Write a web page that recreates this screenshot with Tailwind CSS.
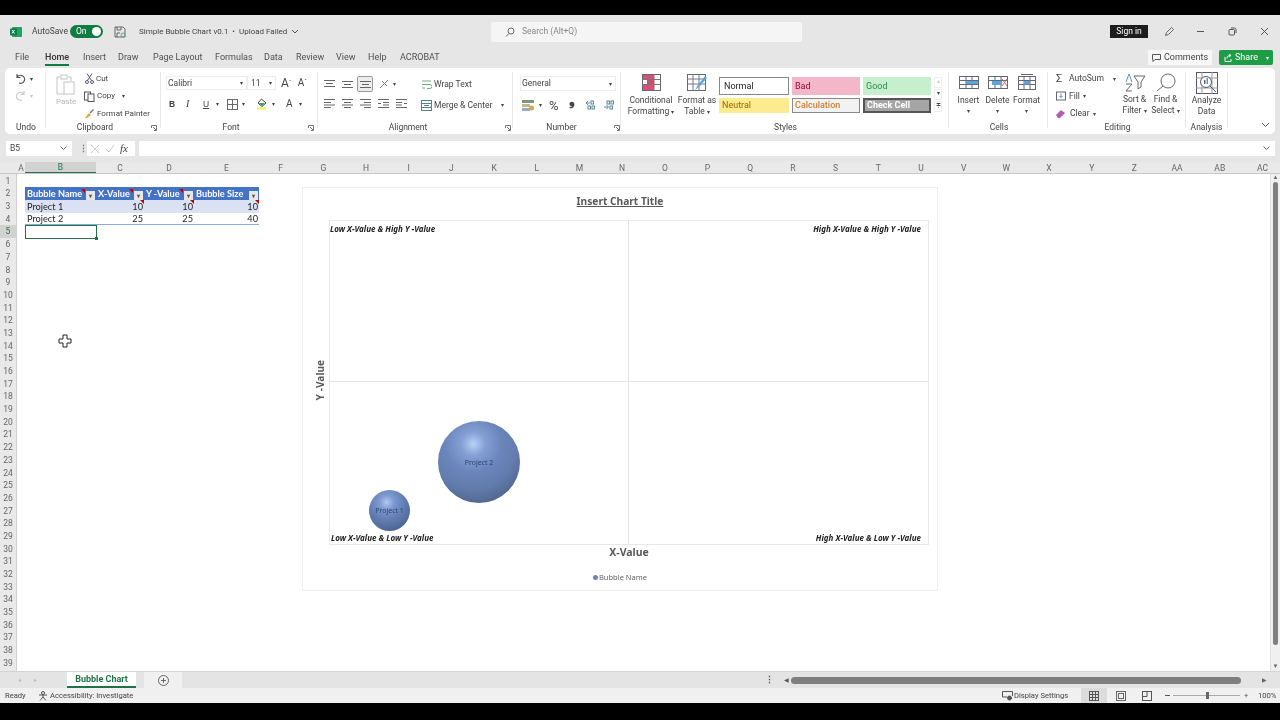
<!DOCTYPE html>
<html><head><meta charset="utf-8"><title>Excel</title>
<script src="https://cdn.jsdelivr.net/npm/@tailwindcss/browser@4"></script></head>
<body class="bg-black">
<div class="w-[1280px] h-[720px] overflow-hidden flex flex-col bg-[#e6e6e6] font-['Roboto',sans-serif] text-[8.5px] text-[#444] leading-none blur-[0.3px]">
<div class="h-[15px] shrink-0 bg-black"></div>

<!-- title bar -->
<div class="h-[30px] shrink-0 flex items-center pl-[10px] pr-[9px] pt-[3px] bg-[#e6e6e6]">
  <svg class="w-[12px] h-[12px]" viewBox="0 0 12 12"><rect x="2" y="1" width="10" height="10" rx="1" fill="#21a366"/><rect x="0" y="2.5" width="7" height="7" rx="1" fill="#107c41"/><path d="M2 4l2.5 3.5M4.500 4L2 7.500" stroke="#fff" stroke-width="1"/></svg>
  <span class="ml-[10px] w-[38px]">AutoSave</span>
  <div class="w-[33px] h-[13px] rounded-full bg-[#107c41] flex items-center justify-between pl-[6px] pr-[2px] text-white"><span>On</span><span class="w-[9px] h-[9px] rounded-full bg-white"></span></div>
  <svg class="ml-[11px] w-[12px] h-[12px]" viewBox="0 0 12 12" fill="none" stroke="#666"><path d="M1 1h8l2 2v8H1z"/><path d="M3 1v3h4V1M3 11V7h3"/><circle cx="9" cy="9" r="2" stroke="#6aa87f"/></svg>
  <span class="ml-[13px] w-[152px] whitespace-nowrap text-[8px]">Simple Bubble Chart v0.1 &nbsp;•&nbsp; Upload Failed</span>
  <svg class="w-[8px] h-[6px]" viewBox="0 0 8 6" fill="none" stroke="#555"><path d="M1 1l3 3 3-3"/></svg>
  <div class="ml-[192px] w-[311px] h-[20px] bg-[#f5f5f5] rounded-[2px] flex items-center pl-[14px] text-[#888]">
    <svg class="w-[10px] h-[10px]" viewBox="0 0 10 10" fill="none" stroke="#666"><circle cx="6" cy="4" r="3"/><path d="M4 6.500L1 9.500"/></svg>
    <span class="ml-[7px]">Search (Alt+Q)</span>
  </div>
  <div class="ml-[308px] w-[38px] h-[13px] bg-[#1d1d1d] text-white flex items-center justify-center">Sign in</div>
  <svg class="ml-[16px] w-[11px] h-[11px]" viewBox="0 0 11 11" fill="none" stroke="#666"><path d="M1.500 9.500l1-3 5-5 2 2-5 5z"/></svg>
  <svg class="ml-[21px] w-[9px] h-[9px]" viewBox="0 0 9 9" stroke="#555"><path d="M1 4.500h7"/></svg>
  <svg class="ml-[23px] w-[9px] h-[9px]" viewBox="0 0 9 9" fill="none" stroke="#555"><rect x="1" y="2.500" width="5.500" height="5.500" rx="1"/><path d="M3 1h3.500a1.500 1.500 0 0 1 1.500 1.500V6"/></svg>
  <svg class="ml-[23px] w-[9px] h-[9px]" viewBox="0 0 9 9" stroke="#555"><path d="M1 1l7 7M8 1l-7 7"/></svg>
</div>

<!-- tabs -->
<div class="h-[23px] shrink-0 flex items-center pl-[15px] pr-[7px] pt-[2px] text-[9px] text-[#505050]">
  <span class="w-[30px]">File</span>
  <span class="w-[38px] h-[21px] flex items-start pt-[6px]"><span class="border-b-2 border-[#107c41] pb-[2px] text-[#333] font-medium">Home</span></span>
  <span class="w-[35px]">Insert</span><span class="w-[35px]">Draw</span><span class="w-[62px]">Page Layout</span><span class="w-[49px]">Formulas</span><span class="w-[32px]">Data</span><span class="w-[40px]">Review</span><span class="w-[32px]">View</span><span class="w-[32px]">Help</span><span>ACROBAT</span>
  <div class="ml-auto w-[64px] h-[15px] bg-[#f7f7f7] flex items-center justify-center gap-[3px] text-[#444]"><svg class="w-[9px] h-[8px]" viewBox="0 0 9 8" fill="none" stroke="#555"><path d="M.5.5h8v5H3L1 7.500V5.500H.5z"/></svg>Comments</div>
  <div class="ml-[7px] w-[54px] h-[15px] bg-[#1f9c46] rounded-[2px] text-white flex items-center pl-[5px] gap-[3px]"><svg class="w-[8px] h-[8px]" viewBox="0 0 8 8" fill="none" stroke="#fff"><path d="M1 3v4.500h6V5M3 4.500c0-2 1.500-3 3-3M5 0l2 1.500L5 3"/></svg>Share<span class="ml-auto mr-[4px] text-[6px]">▾</span></div>
</div>

<!-- ribbon -->
<div class="h-[66px] shrink-0 mx-[5px] bg-white rounded-[5px] flex relative">
  <!-- Undo -->
  <div class="w-[40px] flex flex-col shrink-0">
    <div class="h-[55px] pt-[5px] pl-[10px] flex flex-col gap-[6px]">
      <div class="flex items-center gap-[4px]"><svg class="w-[11px] h-[11px]" viewBox="0 0 11 11" fill="none" stroke="#555" stroke-width="1.200"><path d="M2 1v3.500h3.500M2 4.500A4 4 0 1 1 4 10"/></svg><span class="text-[6px]">▾</span></div>
      <div class="flex items-center gap-[4px] opacity-30"><svg class="w-[11px] h-[11px]" viewBox="0 0 11 11" fill="none" stroke="#555" stroke-width="1.200"><path d="M9 1v3.500H5.500M9 4.500A4 4 0 1 0 7 10"/></svg><span class="text-[6px]">▾</span></div>
    </div>
    <div class="text-center pl-[2px]">Undo</div>
  </div>
  <div class="w-px h-[56px] mt-[4px] bg-[#e8e8e8]"></div>
  <!-- Clipboard -->
  <div class="w-[114px] flex flex-col shrink-0 relative">
    <div class="h-[55px] flex">
      <div class="w-[38px] pl-[10px] pt-[6px] text-[#b5b5b5]">
        <svg class="w-[20px] h-[21px]" viewBox="0 0 20 21" fill="none" stroke="#c4c4c4"><path d="M4 3H1v17h7M12 3h3v4"/><rect x="5" y="1" width="6" height="4"/><rect x="8" y="8" width="10" height="12"/></svg>
        <div class="mt-[3px] text-[8px]">Paste</div>
      </div>
      <div class="pt-[5px] flex flex-col gap-[6.500px] text-[#444] text-[8px]">
        <div class="h-[11px] flex items-center gap-[2px] whitespace-nowrap"><svg class="ml-[1px] w-[9px] h-[11px]" viewBox="0 0 9 11" fill="none" stroke="#557"><path d="M2 .5l4.500 7M7 .5L2.500 7.500"/><circle cx="2" cy="9" r="1.500"/><circle cx="7" cy="9" r="1.500"/></svg>Cut</div>
        <div class="h-[11px] flex items-center gap-[2px] whitespace-nowrap"><svg class="w-[11px] h-[11px]" viewBox="0 0 11 11" fill="none" stroke="#555"><rect x=".5" y="1" width="6" height="8"/><rect x="4" y="3" width="6" height="7.500" fill="#fff"/></svg>Copy<span class="ml-[5px] text-[6px]">▾</span></div>
        <div class="h-[11px] flex items-center gap-[2px] whitespace-nowrap"><svg class="w-[11px] h-[11px]" viewBox="0 0 11 11"><path d="M1 10l4-5 2 2-4 3z" fill="#e3a33a"/><path d="M5.500 4.500L9 1l1 1-3.500 3.500z" fill="#777"/></svg>Format Painter</div>
      </div>
    </div>
    <div class="text-center pr-[16px]">Clipboard</div>
    <svg class="absolute right-[3px] bottom-[3px] w-[6px] h-[6px]" viewBox="0 0 6 6" fill="none" stroke="#777"><path d="M.5 3V.5H5.500v5H3M2 2l3 3"/></svg>
  </div>
  <div class="w-px h-[56px] mt-[4px] bg-[#e8e8e8]"></div>
  <!-- Font -->
  <div class="w-[156px] flex flex-col shrink-0 relative">
    <div class="h-[55px] pl-[5px] pt-[8px]">
      <div class="flex items-center h-[14px]">
        <div class="w-[81px] h-[14px] border border-[#eee] flex items-center justify-between px-[1px] pr-[3px]"><span>Calibri</span><span class="text-[6px]">▾</span></div>
        <div class="w-[29px] h-[14px] border border-[#eee] flex items-center justify-between pl-[3px] pr-[3px]"><span>11</span><span class="text-[6px]">▾</span></div>
        <span class="ml-[5px] text-[12px]">A<sup class="text-[6px]">ˆ</sup></span><span class="ml-[6px] text-[10px]">A<sup class="text-[6px]">ˇ</sup></span>
      </div>
      <div class="mt-[7px] h-[14px] flex items-center pl-[3px]">
        <span class="w-[17px] font-bold font-['Liberation_Sans']">B</span><span class="w-[17px] italic font-['Liberation_Serif'] text-[10px]">I</span><span class="underline w-[13px] font-['Liberation_Sans']">U</span><span class="text-[6px] w-[11px]">▾</span>
        <svg class="w-[11px] h-[11px]" viewBox="0 0 11 11" fill="none" stroke="#666"><rect x=".5" y=".5" width="10" height="10"/><path d="M5.500 0v11M0 5.500h11"/></svg><span class="text-[6px] w-[18px] pl-[4px]">▾</span>
        <svg class="w-[11px] h-[12px]" viewBox="0 0 11 12"><path d="M5.500 1L10 5 6 8.500 2 5z" fill="none" stroke="#444"/><rect x="1" y="9.500" width="9" height="2" fill="#f5ee4a"/><path d="M3 5h6L6 8z" fill="#36a35a"/></svg><span class="text-[6px] w-[19px] pl-[5px]">▾</span>
        <span class="w-[13px] text-[10px]">A</span><span class="text-[6px]">▾</span>
      </div>
    </div>
    <div class="text-center pr-[16px]">Font</div>
    <svg class="absolute right-[3px] bottom-[3px] w-[6px] h-[6px]" viewBox="0 0 6 6" fill="none" stroke="#777"><path d="M.5 3V.5H5.500v5H3M2 2l3 3"/></svg>
  </div>
  <div class="w-px h-[56px] mt-[4px] bg-[#e8e8e8]"></div>
  <!-- Alignment -->
  <div class="w-[194px] flex flex-col shrink-0 relative">
    <div class="h-[55px] pl-[6px] pt-[7px] flex">
      <div class="w-[94px]">
        <div class="flex items-center gap-[7px] h-[17px]">
          <svg class="w-[11px] h-[8px]" viewBox="0 0 11 8" stroke="#666"><path d="M0 .5h11M2 3.500h7M0 6.500h11"/></svg>
          <svg class="w-[11px] h-[8px]" viewBox="0 0 11 8" stroke="#666"><path d="M0 1.500h11M2 4.500h7M0 7.500h11"/></svg>
          <div class="w-[16px] h-[16px] border border-[#999] rounded-[2px] bg-[#eee] flex items-center justify-center -mx-[3px]"><svg class="w-[11px] h-[8px]" viewBox="0 0 11 8" stroke="#666"><path d="M0 1.500h11M2 4.500h7M0 7.500h11"/></svg></div>
          <svg class="ml-[2px] w-[11px] h-[11px]" viewBox="0 0 11 11" fill="none" stroke="#778"><path d="M1 10L9 2M3 3l5 5"/></svg><span class="text-[6px] -ml-[4px]">▾</span>
        </div>
        <div class="mt-[5px] flex items-center gap-[7px] h-[12px]">
          <svg class="w-[11px] h-[9px]" viewBox="0 0 11 9" stroke="#666"><path d="M0 .5h11M0 3.500h7M0 6h11M0 8.500h7"/></svg>
          <svg class="w-[11px] h-[9px]" viewBox="0 0 11 9" stroke="#666"><path d="M0 .5h11M2 3.500h7M0 6h11M2 8.500h7"/></svg>
          <svg class="w-[11px] h-[9px]" viewBox="0 0 11 9" stroke="#666"><path d="M0 .5h11M4 3.500h7M0 6h11M4 8.500h7"/></svg>
          <svg class="w-[11px] h-[9px]" viewBox="0 0 11 9" stroke="#666"><path d="M0 .5h11M5 3.500h6M5 6h6M0 8.500h11M0 4.500h3"/></svg>
          <svg class="w-[11px] h-[9px]" viewBox="0 0 11 9" stroke="#666"><path d="M0 .5h11M0 3.500h6M0 6h6M0 8.500h11M8 4.500h3"/></svg>
        </div>
      </div>
      <div class="ml-[3px] flex flex-col gap-[9px] pt-[3px]">
        <div class="flex items-center gap-[2px] h-[12px] whitespace-nowrap"><svg class="w-[11px] h-[11px]" viewBox="0 0 11 11" fill="none" stroke="#7a8"><path d="M1 2h9M1 5.500h8a2 2 0 0 1 0 4H6M1 9h3"/></svg>Wrap Text</div>
        <div class="flex items-center gap-[2px] h-[12px] whitespace-nowrap"><svg class="w-[11px] h-[11px]" viewBox="0 0 11 11" fill="none" stroke="#5a7f8f"><rect x=".5" y=".5" width="10" height="10"/><path d="M3 5.500h5M.5 3.500h10M.5 7.500h10" /></svg>Merge &amp; Center<span class="ml-[7px] text-[6px]">▾</span></div>
      </div>
    </div>
    <div class="text-center pr-[14px]">Alignment</div>
    <svg class="absolute right-[1px] bottom-[3px] w-[6px] h-[6px]" viewBox="0 0 6 6" fill="none" stroke="#777"><path d="M.5 3V.5H5.500v5H3M2 2l3 3"/></svg>
  </div>
  <div class="w-px h-[56px] mt-[4px] bg-[#e8e8e8]"></div>
  <!-- Number -->
  <div class="w-[107px] flex flex-col shrink-0 relative">
    <div class="h-[55px] pl-[7px] pt-[8px]">
      <div class="w-[96px] h-[15px] border border-[#eee] flex items-center justify-between pl-[1px] pr-[3px]"><span>General</span><span class="text-[6px]">▾</span></div>
      <div class="mt-[7px] h-[14px] flex items-center">
        <svg class="ml-[2px] w-[12px] h-[11px]" viewBox="0 0 12 11"><rect width="12" height="3" fill="#7a9a7a"/><rect y="4" width="8" height="3" fill="#b9b98d"/><rect y="8" width="8" height="3" fill="#9ab"/><circle cx="9.500" cy="8" r="2.500" fill="#d9a84a"/></svg>
        <span class="text-[6px] ml-[5px]">▾</span>
        <span class="ml-[7px] text-[13px] w-[20px]">%</span>
        <span class="text-[15px] font-bold w-[16px] leading-[8px] -mt-[10px]">❟</span>
        <svg class="w-[11px] h-[10px]" viewBox="0 0 11 10" fill="none" stroke="#5a8a9a"><path d="M5 3h-4M3 1L1 3l2 2"/><rect x="6" y="1" width="2.500" height="3"/><rect x="3" y="6" width="2.500" height="3"/><rect x="7" y="6" width="2.500" height="3"/></svg>
        <svg class="ml-[7px] w-[11px] h-[10px]" viewBox="0 0 11 10" fill="none" stroke="#5a8a9a"><path d="M1 7h4M3.500 5L5.500 7l-2 2"/><rect x="4" y="1" width="2.500" height="3"/><rect x="8" y="1" width="2.500" height="3"/><rect x="7" y="6" width="2.500" height="3"/></svg>
      </div>
    </div>
    <div class="text-center pr-[10px]">Number</div>
    <svg class="absolute right-[0px] bottom-[3px] w-[6px] h-[6px]" viewBox="0 0 6 6" fill="none" stroke="#777"><path d="M.5 3V.5H5.500v5H3M2 2l3 3"/></svg>
  </div>
  <div class="w-px h-[56px] mt-[4px] bg-[#e8e8e8]"></div>
  <!-- Styles -->
  <div class="w-[327px] flex flex-col shrink-0">
    <div class="h-[55px] flex">
      <div class="w-[54px] ml-[3px] flex flex-col items-center pt-[6px] text-center leading-[11px]">
        <svg class="w-[19px] h-[17px]" viewBox="0 0 19 17" fill="none"><rect x=".5" y=".5" width="18" height="16" stroke="#666"/><rect x="1" y="1" width="11" height="4" fill="#e8487c"/><rect x="5" y="6" width="7" height="4" fill="#d9486f"/><rect x="1" y="11" width="11" height="5" fill="#e8487c"/><path d="M0 5.500h19M0 10.500h19M6 0v17M12 0v17" stroke="#777"/></svg>
        <div class="mt-[4px] whitespace-nowrap">Conditional</div><div class="whitespace-nowrap">Formatting <span class="text-[6px]">▾</span></div>
      </div>
      <div class="w-[38px] flex flex-col items-center pt-[6px] text-center leading-[11px]">
        <svg class="w-[20px] h-[17px]" viewBox="0 0 20 17" fill="none"><rect x=".5" y=".5" width="18" height="16" stroke="#667"/><path d="M0 5h19M0 10h19M6 0v17M12 0v17" stroke="#778"/><path d="M8 16l3-5 7-9 2 2-8 9z" fill="#5aa7dd"/></svg>
        <div class="mt-[4px] whitespace-nowrap">Format as</div><div class="whitespace-nowrap">Table <span class="text-[6px]">▾</span></div>
      </div>
      <div class="ml-[3px] pt-[9px] grid grid-cols-[70px_68px_68px] gap-x-[3px] gap-y-[3px] grid-rows-[18px_15px] text-[9px]">
        <div class="border border-[#888] flex items-center pl-[4px] text-[#222] h-[18px]">Normal</div>
        <div class="bg-[#f4b7c9] text-[#9c0639] flex items-center pl-[3px] h-[18px]">Bad</div>
        <div class="bg-[#c6efce] text-[#2e8b47] flex items-center pl-[3px] h-[18px]">Good</div>
        <div class="bg-[#fdeb8f] text-[#9c6500] flex items-center pl-[3px]">Neutral</div>
        <div class="bg-[#f2f2f2] border border-[#888] text-[#d08030] font-medium flex items-center pl-[2px]">Calculation</div>
        <div class="bg-[#a5a5a5] border-2 border-[#555] text-white font-bold flex items-center pl-[2px]">Check Cell</div>
      </div>
      <div class="ml-[3px] mt-[9px] w-[8px] flex flex-col text-[6px] text-center gap-[1px]">
        <div class="h-[11px] border border-[#eee] text-[#ccc]">▴</div><div class="h-[11px] border border-[#eee]">▾</div><div class="h-[11px] border border-[#eee]">≑</div>
      </div>
    </div>
    <div class="text-center pl-[2px]">Styles</div>
  </div>
  <div class="w-px h-[56px] mt-[4px] bg-[#e8e8e8]"></div>
  <!-- Cells -->
  <div class="w-[98px] flex flex-col shrink-0">
    <div class="h-[55px] flex justify-center gap-[4px] pt-[6px] pr-[1px] text-center">
      <div class="w-[25px] flex flex-col items-center"><svg class="w-[20px] h-[17px]" viewBox="0 0 20 17" fill="none" stroke="#667"><rect x=".5" y="2.500" width="19" height="12"/><path d="M0 6.500h20M0 10.500h20M7 2v13M13 2v13"/><rect x="7" y="7" width="12" height="3" fill="#5aa7dd" stroke="none"/></svg><div class="mt-[5px]">Insert</div><div class="text-[6px] mt-[3px]">▾</div></div>
      <div class="w-[25px] flex flex-col items-center"><svg class="w-[20px] h-[17px]" viewBox="0 0 20 17" fill="none" stroke="#667"><rect x=".5" y="2.500" width="19" height="12"/><path d="M0 6.500h20M7 2v13M13 2v13"/><rect x="4" y="7" width="10" height="4" fill="#5aa7dd" stroke="none"/><path d="M14 5l5 7M19 5l-5 7" stroke="#c66"/></svg><div class="mt-[5px]">Delete</div><div class="text-[6px] mt-[3px]">▾</div></div>
      <div class="w-[25px] flex flex-col items-center"><svg class="w-[20px] h-[17px]" viewBox="0 0 20 17" fill="none" stroke="#667"><rect x="1.500" y="2.500" width="17" height="13"/><path d="M1 6.500h18M1 10.500h18M7 2v14M13 2v14M4 .5h12"/><rect x="7" y="7" width="6" height="3.500" fill="#5aa7dd" stroke="none"/></svg><div class="mt-[5px]">Format</div><div class="text-[6px] mt-[3px]">▾</div></div>
    </div>
    <div class="text-center pl-[2px]">Cells</div>
  </div>
  <div class="w-px h-[56px] mt-[4px] bg-[#e8e8e8]"></div>
  <!-- Editing -->
  <div class="w-[137px] flex flex-col shrink-0">
    <div class="h-[55px] flex">
      <div class="w-[71px] pl-[8px] pt-[5px] flex flex-col gap-[6.500px]">
        <div class="h-[11px] flex items-center gap-[3px] whitespace-nowrap"><span class="w-[10px] text-[11px]">Σ</span>AutoSum<span class="ml-[6px] text-[6px]">▾</span></div>
        <div class="h-[11px] flex items-center gap-[3px] whitespace-nowrap"><svg class="w-[10px] h-[10px]" viewBox="0 0 10 10" fill="none" stroke="#667"><rect x=".5" y="1" width="9" height="8"/><path d="M5 2.500v4M3.500 5L5 6.500 6.500 5" stroke="#5a8a9a"/></svg>Fill <span class="text-[6px]">▾</span></div>
        <div class="h-[11px] flex items-center gap-[3px] whitespace-nowrap"><svg class="w-[11px] h-[10px]" viewBox="0 0 11 10"><path d="M0 6l5-5 4 3-5 5H2z" fill="#b65ab8"/></svg>Clear <span class="text-[6px]">▾</span></div>
      </div>
      <div class="w-[31px] flex flex-col items-center pt-[5px] text-center leading-[11px]"><svg class="w-[22px] h-[19px]" viewBox="0 0 22 19" fill="none" stroke="#667"><path d="M2 9l3-8 3 8" stroke="#5a9ad0"/><path d="M2 11h6L2 18h6M10 3h11l-4 6v5l-3 2V9z"/></svg><div class="mt-[2px] whitespace-nowrap">Sort &amp;</div><div class="whitespace-nowrap">Filter <span class="text-[6px]">▾</span></div></div>
      <div class="w-[31px] flex flex-col items-center pt-[5px] text-center leading-[11px]"><svg class="w-[21px] h-[19px]" viewBox="0 0 21 19" fill="none" stroke="#667"><circle cx="13" cy="8" r="7"/><path d="M8 13l-6 5"/></svg><div class="mt-[2px] whitespace-nowrap">Find &amp;</div><div class="whitespace-nowrap">Select <span class="text-[6px]">▾</span></div></div>
    </div>
    <div class="text-center pl-[2px]">Editing</div>
  </div>
  <div class="w-px h-[56px] mt-[4px] bg-[#e8e8e8]"></div>
  <!-- Analysis -->
  <div class="w-[41px] flex flex-col shrink-0">
    <div class="h-[55px] flex flex-col items-center pt-[4px] text-center leading-[11px]"><svg class="w-[22px] h-[22px]" viewBox="0 0 22 22" fill="none" stroke="#556"><rect x=".5" y=".5" width="21" height="21"/><path d="M0 6h22M0 16h22M6 0v22M16 0v22" stroke="#999"/><circle cx="10" cy="10" r="5.500" fill="#fff"/><rect x="8" y="8" width="1.500" height="4" fill="#667" stroke="none"/><rect x="10.500" y="6" width="1.500" height="6" fill="#5a9ad0" stroke="none"/><path d="M14 14l6 6"/></svg><div class="mt-[1px] whitespace-nowrap">Analyze</div><div>Data</div></div>
    <div class="text-center">Analysis</div>
  </div>
  <div class="w-px h-[56px] mt-[4px] bg-[#e8e8e8]"></div>
  <svg class="absolute right-[5px] bottom-[6px] w-[9px] h-[6px]" viewBox="0 0 9 6" fill="none" stroke="#555"><path d="M1 1l3.500 3.500L8 1"/></svg>
</div>

<!-- formula bar -->
<div class="h-[28px] shrink-0 flex items-center pl-[6px] pr-[5px] pt-[1px]">
  <div class="w-[66px] h-[15px] bg-white flex items-center justify-between pl-[4px] pr-[5px]"><span>B5</span><svg class="w-[7px] h-[5px]" viewBox="0 0 7 5" fill="none" stroke="#666"><path d="M.5.5l3 3 3-3"/></svg></div>
  <span class="ml-[7px] w-[3px] text-[#777] font-bold leading-[4px]">⋮</span>
  <div class="ml-[5px] w-[48px] h-[15px] bg-white flex items-center pl-[3px] gap-[5px]">
    <svg class="w-[10px] h-[10px]" viewBox="0 0 10 10" stroke="#ccc"><path d="M1 1l8 8M9 1L1 9"/></svg>
    <svg class="w-[10px] h-[10px]" viewBox="0 0 10 10" fill="none" stroke="#ccc"><path d="M1 5l3 3 5-7"/></svg>
    <span class="italic font-['Liberation_Serif'] text-[11px]">fx</span>
  </div>
  <div class="ml-[4px] flex-1 h-[15px] bg-white flex items-center justify-end pr-[5px]"><svg class="w-[7px] h-[5px]" viewBox="0 0 7 5" fill="none" stroke="#666"><path d="M.5.5l3 3 3-3"/></svg></div>
</div>

<!-- column headers -->
<div class="h-[12px] shrink-0 flex bg-[#e9e9e9] border-b border-[#c8c8c8] text-[#666] overflow-hidden text-center items-center pt-[1px]">
  <span class="w-[17px] shrink-0"></span>
  <span class="w-[8px] shrink-0">A</span>
  <span class="w-[71px] shrink-0 h-[12px] bg-[#d2d2d2] border-b-2 border-[#217346] text-[#217346] leading-[11px]">B</span>
  <span class="w-[48px] shrink-0">C</span><span class="w-[50px] shrink-0">D</span><span class="w-[65px] shrink-0">E</span><span class="w-[43px] shrink-0">F</span>
  <span class="w-[42.700px] shrink-0">G</span><span class="w-[42.700px] shrink-0">H</span><span class="w-[42.700px] shrink-0">I</span><span class="w-[42.700px] shrink-0">J</span><span class="w-[42.700px] shrink-0">K</span><span class="w-[42.700px] shrink-0">L</span><span class="w-[42.700px] shrink-0">M</span><span class="w-[42.700px] shrink-0">N</span><span class="w-[42.700px] shrink-0">O</span><span class="w-[42.700px] shrink-0">P</span><span class="w-[42.700px] shrink-0">Q</span><span class="w-[42.700px] shrink-0">R</span><span class="w-[42.700px] shrink-0">S</span><span class="w-[42.700px] shrink-0">T</span><span class="w-[42.700px] shrink-0">U</span><span class="w-[42.700px] shrink-0">V</span><span class="w-[42.700px] shrink-0">W</span><span class="w-[42.700px] shrink-0">X</span><span class="w-[42.700px] shrink-0">Y</span><span class="w-[42.700px] shrink-0">Z</span><span class="w-[42.700px] shrink-0">AA</span><span class="w-[42.700px] shrink-0">AB</span>
  <span class="w-[42.700px] shrink-0">AC</span>
</div>

<!-- sheet -->
<div class="flex-1 min-h-0 flex bg-white overflow-hidden">
  <div class="w-[17px] shrink-0 bg-[#e9e9e9] border-r border-[#d0d0d0] text-[#666] text-center flex flex-col pt-[0.700px] [&>span]:h-[12.700px] [&>span]:shrink-0 [&>span]:leading-[13px]">
    <span>1</span><span>2</span><span>3</span><span>4</span><span class="bg-[#d2d2d2] text-[#217346]">5</span><span>6</span><span>7</span><span>8</span><span>9</span><span>10</span><span>11</span><span>12</span><span>13</span><span>14</span><span>15</span><span>16</span><span>17</span><span>18</span><span>19</span><span>20</span><span>21</span><span>22</span><span>23</span><span>24</span><span>25</span><span>26</span><span>27</span><span>28</span><span>29</span><span>30</span><span>31</span><span>32</span><span>33</span><span>34</span><span>35</span><span>36</span><span>37</span><span>38</span><span>39</span>
  </div>
  <div class="relative flex-1 min-w-0 pl-[8px] pt-[12.700px] font-['Lato',sans-serif] text-[9.200px] text-[#222]">
    <!-- table -->
    <div class="w-[234px]">
      <div class="grid grid-cols-[71px_48px_50px_65px] h-[13px] bg-[#4472c4] text-white font-bold items-center">
        <div class="relative pl-[2px] whitespace-nowrap">Bubble Name<span class="absolute right-[1px] top-[2px] w-[9px] h-[9px] bg-[#e6e6e6] text-[#555] text-[6px] leading-[9px] text-center">▾</span><span class="absolute right-[11px] top-0 border-t-[4px] border-l-[4px] border-t-[#c00000] border-l-transparent"></span></div>
        <div class="relative pl-[2px] whitespace-nowrap">X-Value<span class="absolute right-[1px] top-[2px] w-[9px] h-[9px] bg-[#e6e6e6] text-[#555] text-[6px] leading-[9px] text-center">▾</span><span class="absolute right-[11px] top-0 border-t-[4px] border-l-[4px] border-t-[#c00000] border-l-transparent"></span></div>
        <div class="relative pl-[2px] whitespace-nowrap">Y -Value<span class="absolute right-[1px] top-[2px] w-[9px] h-[9px] bg-[#e6e6e6] text-[#555] text-[6px] leading-[9px] text-center">▾</span><span class="absolute right-[11px] top-0 border-t-[4px] border-l-[4px] border-t-[#c00000] border-l-transparent"></span></div>
        <div class="relative pl-[2px] whitespace-nowrap">Bubble Size<span class="absolute right-[1px] top-[2px] w-[9px] h-[9px] bg-[#e6e6e6] text-[#555] text-[6px] leading-[9px] text-center">▾</span></div>
      </div>
      <div class="grid grid-cols-[71px_48px_50px_65px] h-[13px] bg-[#d9e1f2] items-center">
        <div class="pl-[2px]">Project 1</div>
        <div class="relative text-right pr-[1px]">10<span class="absolute right-0 -top-[2px] border-t-[4px] border-l-[4px] border-t-[#c00000] border-l-transparent"></span></div>
        <div class="relative text-right pr-[1px]">10<span class="absolute right-0 -top-[2px] border-t-[4px] border-l-[4px] border-t-[#c00000] border-l-transparent"></span></div>
        <div class="relative text-right pr-[1px]">10<span class="absolute right-0 -top-[2px] border-t-[4px] border-l-[4px] border-t-[#c00000] border-l-transparent"></span></div>
      </div>
      <div class="grid grid-cols-[71px_48px_50px_65px] h-[12.500px] border-b border-[#8ea9db] items-center">
        <div class="pl-[2px]">Project 2</div><div class="text-right pr-[1px]">25</div><div class="text-right pr-[1px]">25</div><div class="text-right pr-[1px]">40</div>
      </div>
      <div class="w-[72px] h-[14px] border-[1.500px] border-[#217346] -mt-[0.500px] relative"><span class="absolute -right-[2px] -bottom-[2px] w-[3px] h-[3px] bg-[#217346]"></span></div>
    </div>
    <!-- cursor -->
    <svg class="absolute left-[41px] top-[160px] w-[14px] h-[14px]" viewBox="0 0 14 14" fill="#fff" stroke="#222"><path d="M5 1h4v4h4v4H9v4H5V9H1V5h4z"/></svg>

    <!-- chart -->
    <div class="absolute left-[285px] top-[13px] w-[636px] h-[404px] bg-white border border-[#ededed] font-['Noto_Sans',sans-serif]">
      <div class="absolute left-0 w-full top-[8px] text-center text-[10.200px] font-bold text-[#595959] underline">Insert Chart Title</div>
      <div class="absolute left-[26px] top-[32px] w-[600px] h-[325px] border border-[#e8e8e8]">
        <div class="absolute left-[298px] top-0 bottom-0 w-px bg-[#e4e4e4]"></div>
        <div class="absolute top-[160px] left-0 right-0 h-px bg-[#e4e4e4]"></div>
        <div class="absolute left-0 top-[4px] text-[8px] font-bold italic text-[#222] whitespace-nowrap">Low X-Value &amp; High Y -Value</div>
        <div class="absolute right-[7px] top-[4px] text-[8px] font-bold italic text-[#222] whitespace-nowrap">High X-Value &amp; High Y -Value</div>
        <div class="absolute left-[1px] bottom-[2px] text-[8px] font-bold italic text-[#222] whitespace-nowrap">Low X-Value &amp; Low Y -Value</div>
        <div class="absolute right-[7px] bottom-[2px] text-[8px] font-bold italic text-[#222] whitespace-nowrap">High X-Value &amp; Low Y -Value</div>
        <div class="absolute left-[108px] top-[200px] w-[82px] h-[82px] rounded-full bg-[radial-gradient(circle_at_43%_28%,#b8d2f6_0%,#849fd4_16%,#6a85ba_38%,#647dae_58%,#50678f_80%,#566c94_92%,#8699bf_100%)] flex items-center justify-center text-[7px] text-[#2a4670]">Project 2</div>
        <div class="absolute left-[39px] top-[269px] w-[41px] h-[41px] rounded-full bg-[radial-gradient(circle_at_43%_30%,#b0caf0_0%,#7e99cf_20%,#6480b5_45%,#56709f_65%,#465c87_88%,#6b82ae_100%)] flex items-center justify-center text-[7px] text-[#2a4670]">Project 1</div>
      </div>
      <div class="absolute left-[-13px] top-[187px] w-[60px] text-center -rotate-90 text-[10.200px] font-bold text-[#595959]">Y -Value</div>
      <div class="absolute left-[26px] w-[600px] top-[359px] text-center text-[10.500px] font-bold text-[#595959]">X-Value</div>
      <div class="absolute left-0 w-full top-[386px] flex justify-center items-center gap-[1px] text-[7.500px] text-[#666]"><span class="w-[5px] h-[5px] rounded-full bg-[#6b83b8]"></span>Bubble Name</div>
    </div>

    <!-- vertical scrollbar -->
    <div class="absolute right-0 top-0 bottom-0 w-[10px] bg-[#f0f0f0] flex flex-col items-center border-l border-[#e0e0e0]">
      <span class="text-[6px] text-[#666] h-[8px]">▲</span>
      <div class="w-[5px] h-[463px] bg-[#7f7f7f] rounded-full"></div>
      <span class="mt-auto text-[6px] text-[#666] h-[8px]">▼</span>
    </div>
  </div>
</div>

<!-- sheet tabs -->
<div class="h-[17px] shrink-0 flex items-center bg-[#e4e4e4] border-t border-[#d4d4d4]">
  <div class="w-[67px] flex gap-[13px] text-[6px] text-[#bbb] pl-[18px]"><span>◂</span><span>▸</span></div>
  <div class="w-[69px] h-[16px] bg-white border-b-2 border-[#217346] text-[#217346] font-bold text-[9px] flex items-center justify-center">Bubble Chart</div>
  <div class="w-[38px] h-[16px] bg-[#f0f0f0] flex items-center justify-center ml-[8px]"><svg class="w-[11px] h-[11px]" viewBox="0 0 11 11" fill="none" stroke="#666"><circle cx="5.500" cy="5.500" r="5"/><path d="M5.500 3v5M3 5.500h5"/></svg></div>
  <span class="ml-auto font-bold text-[#555] leading-[4px]">⋮</span>
  <span class="ml-[10px] text-[6px] text-[#555]">◀</span>
  <div class="ml-[2px] w-[450px] h-[7px] rounded-full bg-[#7f7f7f]"></div>
  <span class="ml-[21px] mr-[13px] text-[6px] text-[#666]">▶</span>
</div>

<!-- status bar -->
<div class="h-[15px] shrink-0 flex items-center bg-[#f0f0f0] pl-[5px] text-[#444] text-[7.600px]">
  <span class="w-[33px]">Ready</span>
  <svg class="w-[10px] h-[10px]" viewBox="0 0 10 10" fill="none" stroke="#555"><circle cx="5" cy="2" r="1.500"/><path d="M1 4h8M5 4v2L2 9.500M5 6l3 3.500"/></svg>
  <span class="ml-[2px] whitespace-nowrap">Accessibility: Investigate</span>
  <svg class="ml-auto w-[11px] h-[10px]" viewBox="0 0 11 10" fill="none" stroke="#555"><path d="M.5 6V.5h10V5M.5 6H5"/><circle cx="7.500" cy="7" r="2" fill="#555"/></svg>
  <span class="ml-[1px] whitespace-nowrap w-[67px]">Display Settings</span>
  <div class="w-[26px] h-[15px] bg-[#dcdcdc] flex items-center justify-center"><svg class="w-[10px] h-[10px]" viewBox="0 0 10 10" fill="none" stroke="#555"><rect x=".5" y=".5" width="9" height="9"/><path d="M3.500 0v10M6.500 0v10M0 3.500h10M0 6.500h10"/></svg></div>
  <svg class="ml-[9px] w-[10px] h-[10px]" viewBox="0 0 10 10" fill="none" stroke="#666"><rect x=".5" y=".5" width="9" height="9"/><rect x="2.500" y="2.500" width="5" height="5"/></svg>
  <svg class="ml-[16px] w-[10px] h-[10px]" viewBox="0 0 10 10" fill="none" stroke="#555"><rect x=".5" y=".5" width="9" height="9"/><path d="M5 .5v5H.5"/></svg>
  <span class="ml-[13px] w-[5px] h-px bg-[#555]"></span>
  <div class="ml-[3px] w-[67px] h-px bg-[#aaa] relative"><span class="absolute left-[33px] -top-[3px] w-[3px] h-[7px] bg-[#666]"></span></div>
  <span class="ml-[4px] w-[5px] text-[#555]">+</span>
  <span class="ml-[9px] w-[22px]">100%</span>
</div>
<div class="h-[17px] shrink-0 bg-black"></div>
</div>
</body></html>
